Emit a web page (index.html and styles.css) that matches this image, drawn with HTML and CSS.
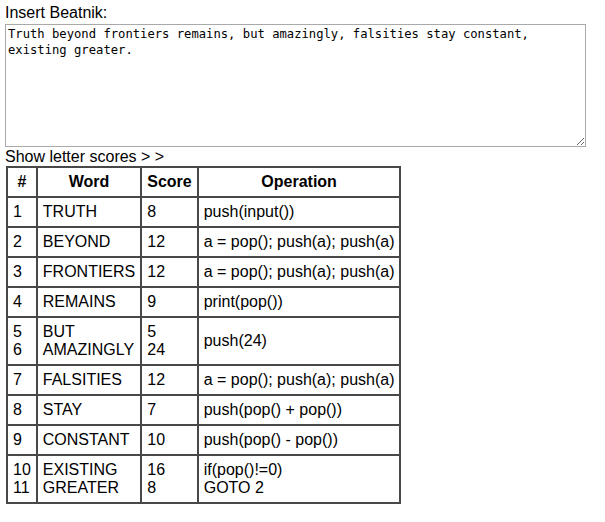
FILE: index.html
```html
<!DOCTYPE html>
<html>
<head>
<meta charset="utf-8">
<link rel="stylesheet" href="styles.css">
</head>
<body>
<div class="label">Insert Beatnik:</div>
<textarea class="source">Truth beyond frontiers remains, but amazingly, falsities stay constant, existing greater.</textarea>
<div class="toggle">Show letter scores &gt; &gt;</div>
<table class="words">
  <tr><th>#</th><th>Word</th><th>Score</th><th>Operation</th></tr>
  <tr><td>1</td><td>TRUTH</td><td>8</td><td>push(input())</td></tr>
  <tr><td>2</td><td>BEYOND</td><td>12</td><td>a = pop(); push(a); push(a)</td></tr>
  <tr><td>3</td><td>FRONTIERS</td><td>12</td><td>a = pop(); push(a); push(a)</td></tr>
  <tr><td>4</td><td>REMAINS</td><td>9</td><td>print(pop())</td></tr>
  <tr><td>5<br>6</td><td>BUT<br>AMAZINGLY</td><td>5<br>24</td><td>push(24)</td></tr>
  <tr><td>7</td><td>FALSITIES</td><td>12</td><td>a = pop(); push(a); push(a)</td></tr>
  <tr><td>8</td><td>STAY</td><td>7</td><td>push(pop() + pop())</td></tr>
  <tr><td>9</td><td>CONSTANT</td><td>10</td><td>push(pop() - pop())</td></tr>
  <tr><td>10<br>11</td><td>EXISTING<br>GREATER</td><td>16<br>8</td><td>if(pop()!=0)<br>GOTO 2</td></tr>
</table>
</body>
</html>
```
FILE: styles.css
```css
html, body {
  background: #fff;
}
body {
  margin: 4px 5px;
  font-family: "Liberation Sans", Arial, sans-serif;
  font-size: 16px;
  line-height: 18px;
  color: #000;
}
.label {
  height: 20px;
}
.source {
  display: block;
  box-sizing: border-box;
  width: 581px;
  height: 123px;
  margin: 0;
  padding: 2px;
  border: 1px solid #a9a9a9;
  font-family: "DejaVu Sans Mono", monospace;
  font-size: 12.2px;
  line-height: 15.5px;
  color: #000;
  resize: both;
}
.toggle {
  height: 19px;
  line-height: 19px;
}
.words {
  border-collapse: collapse;
  margin-left: 1px;
}
.words th, .words td {
  border: 2px solid #484848;
  padding: 5px 5px;
  line-height: 18px;
  text-align: left;
  vertical-align: middle;
}
.words th {
  text-align: center;
  font-weight: bold;
}
```
